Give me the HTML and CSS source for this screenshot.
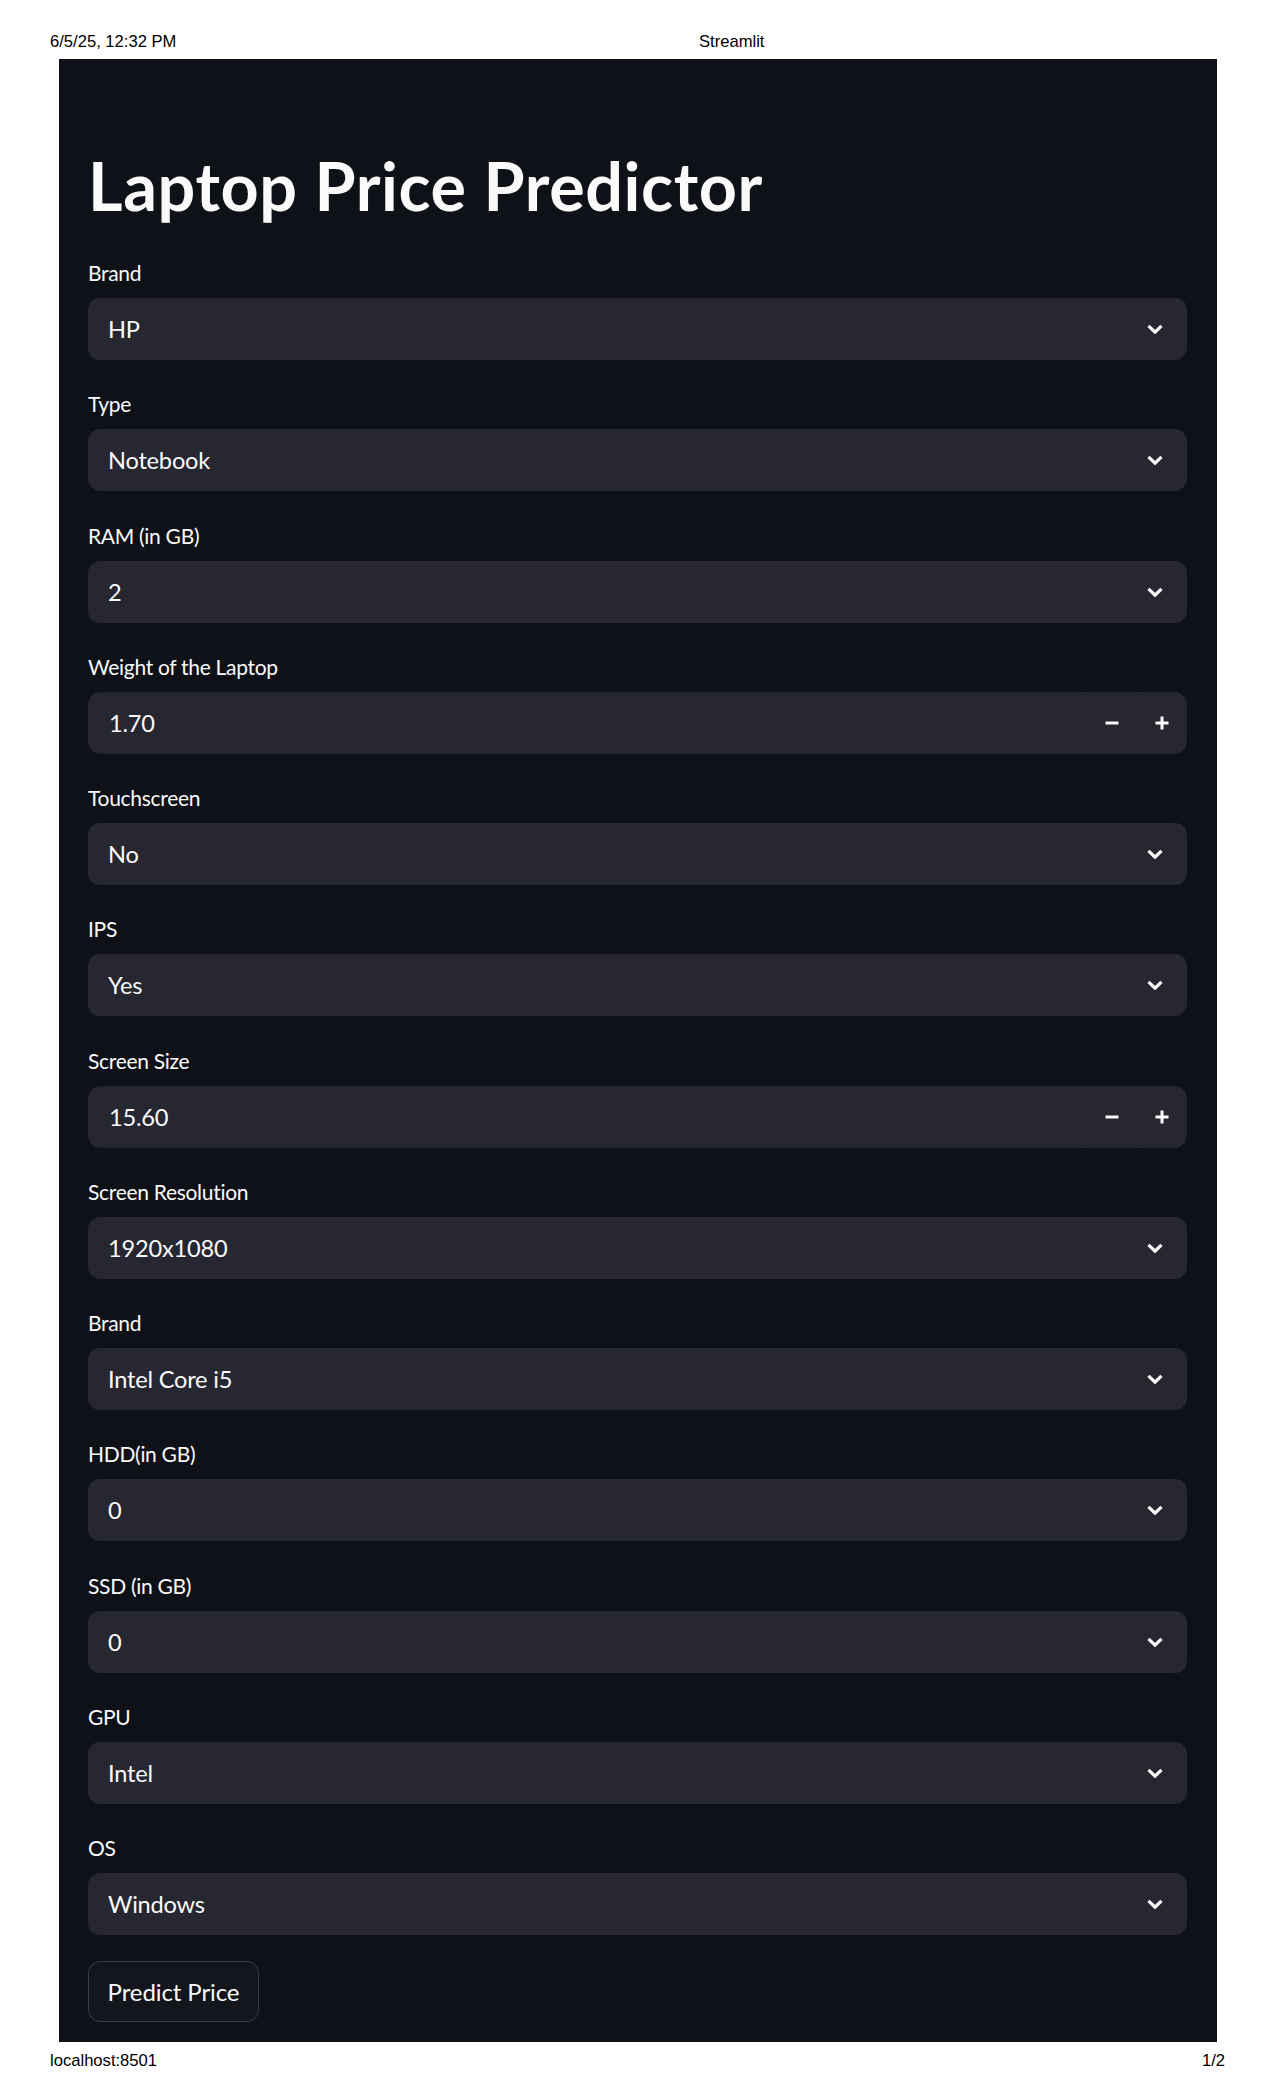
FILE: index.html
```html
<!DOCTYPE html>
<html lang="en">
<head>
<meta charset="utf-8">
<title>Streamlit</title>
<link rel="stylesheet" href="styles.css">
</head>
<body>
<div class="sheet">
  <header class="print-head">
    <span class="print-date">6/5/25, 12:32 PM</span>
    <span class="print-title">Streamlit</span>
  </header>

  <main class="app">
    <h1 class="app-title">Laptop Price Predictor</h1>

    <div class="fields">
      <div class="field">
        <label class="field-label">Brand</label>
        <div class="select"><span class="select-value">HP</span><svg class="chev" viewBox="0 0 16 10" width="16" height="10"><polyline points="1.5,1.8 8,8.2 14.5,1.8"/></svg></div>
      </div>
      <div class="field">
        <label class="field-label">Type</label>
        <div class="select"><span class="select-value">Notebook</span><svg class="chev" viewBox="0 0 16 10" width="16" height="10"><polyline points="1.5,1.8 8,8.2 14.5,1.8"/></svg></div>
      </div>
      <div class="field">
        <label class="field-label">RAM (in GB)</label>
        <div class="select"><span class="select-value">2</span><svg class="chev" viewBox="0 0 16 10" width="16" height="10"><polyline points="1.5,1.8 8,8.2 14.5,1.8"/></svg></div>
      </div>
      <div class="field">
        <label class="field-label">Weight of the Laptop</label>
        <div class="number">
          <span class="select-value">1.70</span>
          <div class="step"><svg viewBox="0 0 14 14" width="14" height="14"><rect x="0.5" y="5.5" width="13" height="3"/></svg></div>
          <div class="step"><svg viewBox="0 0 14 14" width="14" height="14"><rect x="0.5" y="5.5" width="13" height="3"/><rect x="5.5" y="0.5" width="3" height="13"/></svg></div>
        </div>
      </div>
      <div class="field">
        <label class="field-label">Touchscreen</label>
        <div class="select"><span class="select-value">No</span><svg class="chev" viewBox="0 0 16 10" width="16" height="10"><polyline points="1.5,1.8 8,8.2 14.5,1.8"/></svg></div>
      </div>
      <div class="field">
        <label class="field-label">IPS</label>
        <div class="select"><span class="select-value">Yes</span><svg class="chev" viewBox="0 0 16 10" width="16" height="10"><polyline points="1.5,1.8 8,8.2 14.5,1.8"/></svg></div>
      </div>
      <div class="field">
        <label class="field-label">Screen Size</label>
        <div class="number">
          <span class="select-value">15.60</span>
          <div class="step"><svg viewBox="0 0 14 14" width="14" height="14"><rect x="0.5" y="5.5" width="13" height="3"/></svg></div>
          <div class="step"><svg viewBox="0 0 14 14" width="14" height="14"><rect x="0.5" y="5.5" width="13" height="3"/><rect x="5.5" y="0.5" width="3" height="13"/></svg></div>
        </div>
      </div>
      <div class="field">
        <label class="field-label">Screen Resolution</label>
        <div class="select"><span class="select-value">1920x1080</span><svg class="chev" viewBox="0 0 16 10" width="16" height="10"><polyline points="1.5,1.8 8,8.2 14.5,1.8"/></svg></div>
      </div>
      <div class="field">
        <label class="field-label">Brand</label>
        <div class="select"><span class="select-value">Intel Core i5</span><svg class="chev" viewBox="0 0 16 10" width="16" height="10"><polyline points="1.5,1.8 8,8.2 14.5,1.8"/></svg></div>
      </div>
      <div class="field">
        <label class="field-label">HDD(in GB)</label>
        <div class="select"><span class="select-value">0</span><svg class="chev" viewBox="0 0 16 10" width="16" height="10"><polyline points="1.5,1.8 8,8.2 14.5,1.8"/></svg></div>
      </div>
      <div class="field">
        <label class="field-label">SSD (in GB)</label>
        <div class="select"><span class="select-value">0</span><svg class="chev" viewBox="0 0 16 10" width="16" height="10"><polyline points="1.5,1.8 8,8.2 14.5,1.8"/></svg></div>
      </div>
      <div class="field">
        <label class="field-label">GPU</label>
        <div class="select"><span class="select-value">Intel</span><svg class="chev" viewBox="0 0 16 10" width="16" height="10"><polyline points="1.5,1.8 8,8.2 14.5,1.8"/></svg></div>
      </div>
      <div class="field">
        <label class="field-label">OS</label>
        <div class="select"><span class="select-value">Windows</span><svg class="chev" viewBox="0 0 16 10" width="16" height="10"><polyline points="1.5,1.8 8,8.2 14.5,1.8"/></svg></div>
      </div>
    </div>

    <button class="predict" type="button">Predict Price</button>
  </main>

  <footer class="print-foot">
    <span>localhost:8501</span>
    <span>1/2</span>
  </footer>
</div>
</body>
</html>
```

FILE: styles.css
```css
* { box-sizing: border-box; }

html, body {
  margin: 0;
  padding: 0;
  background: #ffffff;
}

.sheet {
  width: 1275px;
  height: 2100px;
  overflow: hidden;
}

.print-head {
  height: 59px;
  padding: 33px 0 0 50px;
  display: flex;
  font-family: "Liberation Sans", Arial, sans-serif;
  font-size: 16.6px;
  line-height: 18px;
  color: #000;
}

.print-date {
  width: 649px;
}

.app {
  margin-left: 59px;
  width: 1158px;
  height: 1983px;
  background: #0e1117;
  padding: 87px 30px 0 29px;
  font-family: Lato, "Noto Sans", sans-serif;
  color: #fafafa;
}

.app-title {
  margin: 0;
  font-size: 66.5px;
  line-height: 79px;
  font-weight: 700;
  letter-spacing: 0.6px;
  padding-left: 0;
}

.fields {
  margin-top: 35px;
  display: flex;
  flex-direction: column;
  gap: 31.25px;
}

.field {
  display: flex;
  flex-direction: column;
}

.field-label {
  font-size: 21px;
  line-height: 25.2px;
  margin-bottom: 12.8px;
  letter-spacing: -0.3px;
}

.select,
.number {
  height: 62px;
  background: #262730;
  border-radius: 12px;
  display: flex;
  align-items: center;
}

.select {
  padding: 0 32px 0 20px;
  justify-content: space-between;
}

.number {
  padding-left: 20px;
  border: 1px solid #22232b;
}

.select-value {
  font-size: 23.6px;
  letter-spacing: -0.2px;
  flex: 1;
}

.chev {
  fill: none;
  stroke: #fafafa;
  stroke-width: 3.2;
  margin-right: -8px;
}

.step {
  width: 50px;
  height: 100%;
  display: flex;
  align-items: center;
  justify-content: center;
  border-left: 1px solid #23242c;
}

.step svg {
  fill: #fafafa;
}

.predict {
  margin-top: 25.5px;
  width: 171px;
  height: 61px;
  border: 1px solid #3b3d45;
  border-radius: 12px;
  background: #13161d;
  color: #fafafa;
  font-family: Lato, "Noto Sans", sans-serif;
  font-size: 24px;
  letter-spacing: -0.1px;
  padding: 0;
  text-align: center;
}

.print-foot {
  padding: 10px 50px 0 50px;
  display: flex;
  justify-content: space-between;
  font-family: "Liberation Sans", Arial, sans-serif;
  font-size: 16.6px;
  line-height: 18px;
  color: #000;
}
```
